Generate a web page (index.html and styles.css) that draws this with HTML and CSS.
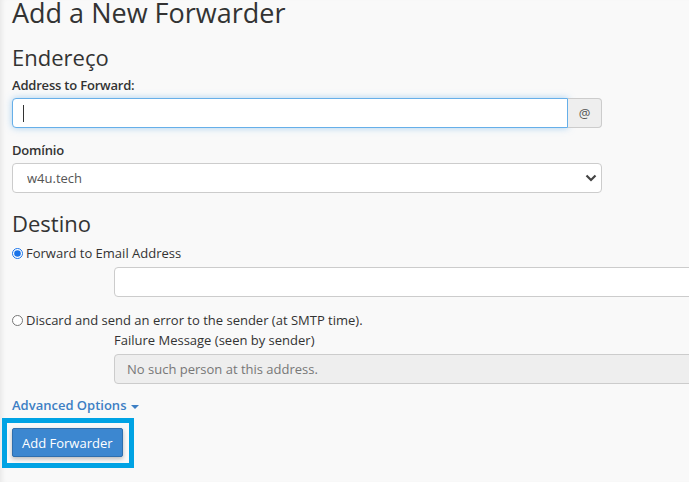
FILE: index.html
```html
<!DOCTYPE html>
<html lang="pt">
<head>
  <meta charset="UTF-8">
  <meta name="viewport" content="width=device-width, initial-scale=1.0">
  <title>Add a New Forwarder</title>
  <link rel="stylesheet" href="styles.css">
</head>
<body>
  <main class="page">
    <h1>Add a New Forwarder</h1>

    <h2>Endereço</h2>
    <label class="field-label" for="email">Address to Forward:</label>
    <div class="input-group">
      <input type="text" id="email" class="form-control focused">
      <span class="text-caret"></span>
      <span class="addon">@</span>
    </div>

    <label class="field-label label-domain" for="domain">Domínio</label>
    <select id="domain" class="form-control select">
      <option>w4u.tech</option>
    </select>

    <h2 class="h2-dest">Destino</h2>
    <label class="radio-row">
      <input type="radio" name="fwdopt" checked>
      <span>Forward to Email Address</span>
    </label>
    <div class="indent">
      <input type="text" class="form-control wide">
    </div>

    <label class="radio-row radio-fail">
      <input type="radio" name="fwdopt">
      <span>Discard and send an error to the sender (at SMTP time).</span>
    </label>
    <div class="indent">
      <div class="sub-label">Failure Message (seen by sender)</div>
      <input type="text" class="form-control wide" value="No such person at this address." disabled>
    </div>

    <a href="#" class="advanced">Advanced Options <span class="caret"></span></a>

    <div class="highlight">
      <button type="button" class="btn-primary">Add Forwarder</button>
    </div>
  </main>
</body>
</html>
```

FILE: styles.css
```css
html, body {
  margin: 0;
  height: 100%;
}
body {
  font-family: 'Open Sans', 'Liberation Sans', sans-serif;
  font-size: 13px;
  color: #333;
  background: #f9f9f9;
  overflow: hidden;
  box-shadow: inset 5px 0 5px -3px rgba(0,0,0,0.07);
}
.page {
  padding-left: 12px;
}
h1 {
  font-size: 27px;
  font-weight: 400;
  line-height: 26px;
  margin: 0;
}
h2 {
  font-size: 22px;
  font-weight: 400;
  line-height: 26px;
  margin: 18px 0 0;
}
.h2-dest {
  margin-top: 17px;
}
.field-label {
  display: block;
  font-weight: 600;
  letter-spacing: -0.2px;
  line-height: 18px;
  margin-top: 6px;
}
.label-domain {
  margin-top: 13px;
}
.form-control {
  display: block;
  box-sizing: border-box;
  height: 30px;
  padding: 4px 12px;
  font-family: inherit;
  font-size: 13px;
  color: #555;
  background: #fff;
  border: 1px solid #ccc;
  border-radius: 4px;
  outline: none;
}
.input-group {
  position: relative;
  display: flex;
  width: 590px;
  margin-top: 4px;
}
.input-group .form-control {
  flex: 1;
  border-radius: 4px 0 0 4px;
}
.focused {
  border-color: #66afe9;
  box-shadow: 0 0 7px rgba(102,175,233,0.55);
}
.text-caret {
  position: absolute;
  left: 11px;
  top: 7px;
  width: 1px;
  height: 17px;
  background: #333;
}
.addon {
  width: 34px;
  box-sizing: border-box;
  display: flex;
  align-items: center;
  justify-content: center;
  background: #eee;
  border: 1px solid #ccc;
  border-left: none;
  border-radius: 0 4px 4px 0;
  color: #555;
  font-size: 13px;
}
.select {
  width: 590px;
  margin-top: 4px;
  padding-left: 14px;
  appearance: none;
  -webkit-appearance: none;
  background: #fff url("data:image/svg+xml,%3Csvg xmlns='http://www.w3.org/2000/svg' width='12' height='8' viewBox='0 0 12 8'%3E%3Cpath d='M1.5 1.5l4.5 4.5 4.5-4.5' fill='none' stroke='%23444' stroke-width='2.2'/%3E%3C/svg%3E") no-repeat right 4px center;
}
.radio-row {
  display: flex;
  align-items: center;
  line-height: 18px;
  margin-top: 8px;
}
.radio-row input {
  width: 11px;
  height: 11px;
  margin: 0 3px 0 0;
  accent-color: #1a73e8;
}
.radio-fail {
  margin-top: 14px;
}
.indent {
  padding-left: 102px;
}
.indent .wide {
  width: 620px;
  margin-top: 5px;
}
.sub-label {
  line-height: 18px;
  margin-top: 2px;
}
.wide:disabled {
  background: #eee;
  color: #777;
}
.advanced {
  display: inline-block;
  margin-top: 12px;
  font-size: 13px;
  font-weight: 600;
  line-height: 18px;
  color: #3d7fc4;
  text-decoration: none;
}
.caret {
  display: inline-block;
  width: 0;
  height: 0;
  margin-left: 1px;
  vertical-align: middle;
  border-top: 4px solid #3d7fc4;
  border-left: 4px solid transparent;
  border-right: 4px solid transparent;
}
.highlight {
  display: block;
  width: max-content;
  margin: 4px 0 0 -10px;
  padding: 5px 6px 6px 5px;
  border: 5px solid #00a3e4;
}
.btn-primary {
  display: block;
  height: 29px;
  padding: 0 9px;
  font-family: inherit;
  font-size: 13px;
  color: #fff;
  background: #3c87d0;
  border: 1px solid #2f6fae;
  border-radius: 2px;
  box-shadow: 0 2px 4px rgba(0,0,0,0.25);
  cursor: pointer;
}
```
